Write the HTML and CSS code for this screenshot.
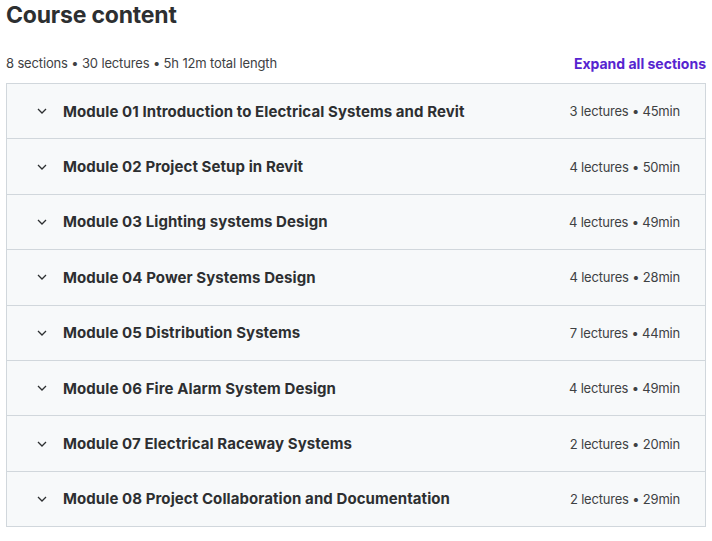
FILE: index.html
```html
<!DOCTYPE html>
<html lang="en">
<head>
<meta charset="utf-8">
<link rel="stylesheet" href="styles.css">
</head>
<body>
<div class="page">
  <h2 class="title">Course content</h2>
  <div class="meta-row">
    <span class="meta">8 sections • 30 lectures • 5h 12m total length</span>
    <button class="expand">Expand all sections</button>
  </div>
  <div class="sections">
    <div class="section"><svg class="chev" viewBox="0 0 10 6"><path d="M1 1l4 4 4-4"/></svg><span class="name">Module 01 Introduction to Electrical Systems and Revit</span><span class="info">3 lectures • 45min</span></div>
    <div class="section"><svg class="chev" viewBox="0 0 10 6"><path d="M1 1l4 4 4-4"/></svg><span class="name">Module 02 Project Setup in Revit</span><span class="info">4 lectures • 50min</span></div>
    <div class="section"><svg class="chev" viewBox="0 0 10 6"><path d="M1 1l4 4 4-4"/></svg><span class="name">Module 03 Lighting systems Design</span><span class="info">4 lectures • 49min</span></div>
    <div class="section"><svg class="chev" viewBox="0 0 10 6"><path d="M1 1l4 4 4-4"/></svg><span class="name">Module 04 Power Systems Design</span><span class="info">4 lectures • 28min</span></div>
    <div class="section"><svg class="chev" viewBox="0 0 10 6"><path d="M1 1l4 4 4-4"/></svg><span class="name">Module 05 Distribution Systems</span><span class="info">7 lectures • 44min</span></div>
    <div class="section"><svg class="chev" viewBox="0 0 10 6"><path d="M1 1l4 4 4-4"/></svg><span class="name">Module 06 Fire Alarm System Design</span><span class="info">4 lectures • 49min</span></div>
    <div class="section"><svg class="chev" viewBox="0 0 10 6"><path d="M1 1l4 4 4-4"/></svg><span class="name">Module 07 Electrical Raceway Systems</span><span class="info">2 lectures • 20min</span></div>
    <div class="section"><svg class="chev" viewBox="0 0 10 6"><path d="M1 1l4 4 4-4"/></svg><span class="name">Module 08 Project Collaboration and Documentation</span><span class="info">2 lectures • 29min</span></div>
  </div>
</div>
</body>
</html>
```
FILE: styles.css
```css
* { box-sizing: border-box; }
html, body { margin: 0; padding: 0; background: #fff; }
body { font-family: Inter, "Noto Sans", sans-serif; color: #2d2f31; }
.page { padding: 0 6px 0 6px; width: 712px; }
.title { margin: 0; font-size: 23px; line-height: 30px; font-weight: 700; letter-spacing: -0.2px; padding-top: 0; }
.meta-row { display: flex; justify-content: space-between; align-items: center; margin-top: 22px; height: 22px; margin-bottom: 9px; }
.meta { font-size: 13px; color: #3e4143; letter-spacing: -0.15px; }
.expand { border: 0; background: none; padding: 0; font-family: inherit; font-size: 14px; font-weight: 700; color: #5624d0; cursor: pointer; }
.sections { border: 1px solid #d1d7dc; }
.section { display: flex; align-items: center; height: 55.4px; background: #f7f9fa; border-bottom: 1px solid #d1d7dc; padding: 0 25px 0 30px; }
.section:last-child { border-bottom: 0; height: 54px; }
.chev { width: 10px; height: 6px; fill: none; stroke: #2d2f31; stroke-width: 1.3; margin-right: 16px; flex: none; }
.name { font-size: 15px; font-weight: 700; flex: 1; letter-spacing: 0.08px; }
.info { font-size: 13px; color: #3e4143; letter-spacing: -0.2px; }
```
